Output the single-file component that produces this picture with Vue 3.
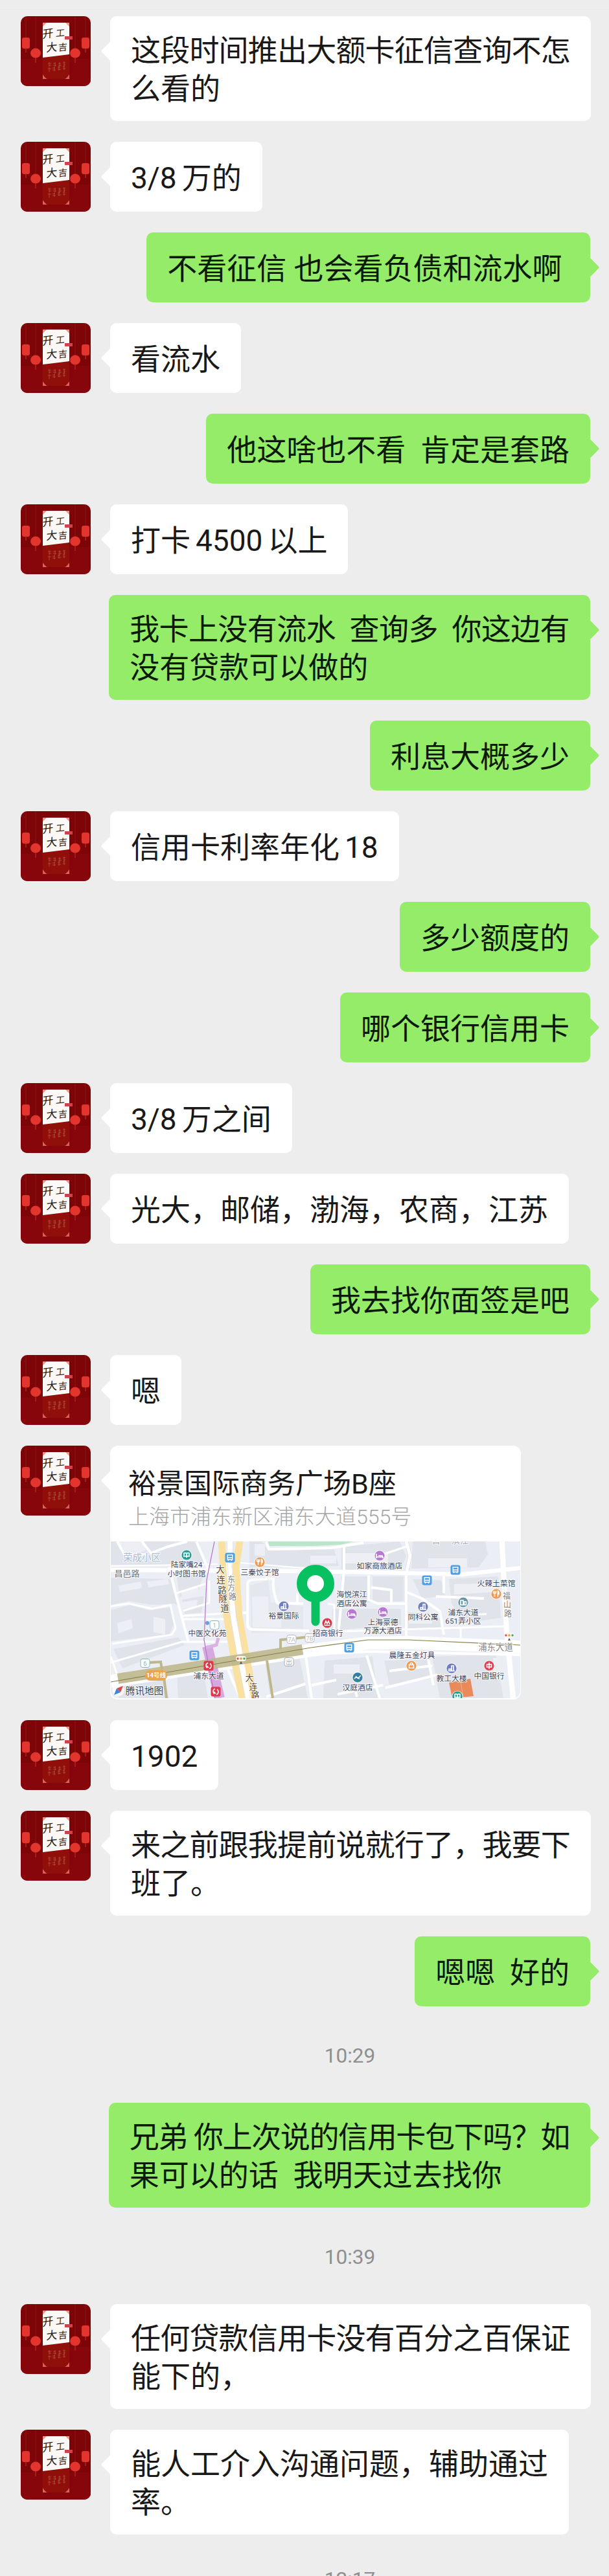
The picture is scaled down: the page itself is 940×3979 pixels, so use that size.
<template>
  <div class="chat">
    <template v-for="(m, i) in messages" :key="i">
      <div v-if="m.type === 'time'" class="time">{{ m.text }}</div>

      <div v-else class="row" :class="m.me ? 'me' : 'peer'">
        <svg v-if="!m.me" class="avatar" viewBox="0 0 108 108">
          <rect width="108" height="108" fill="#7d0508" />
          <path d="M0 66H108V108H0z" fill="#87060b" />
          <path d="M8 0V34M100 0V34M23 0V50M84 0V50" stroke="#94201d" stroke-width=".7" />
          <path d="M34 60h41v37H34z" fill="#900f0a" />
          <path d="M34 10h41v49L34 64z" fill="#fbf8f6" />
          <path d="M34 10h6l-6 6zM75 10h-6l6 6z" fill="#e9958b" />
          <path d="M34 97v-7q4 6 7 7zM75 97v-7q-4 6-7 7z" fill="#d9645c" />
          <g fill="#e2352e">
            <rect x="2" y="33" width="12" height="17" rx="3" />
            <rect x="94" y="33" width="12" height="17" rx="3" />
            <ellipse cx="23" cy="57" rx="8" ry="7.5" />
            <ellipse cx="84" cy="57" rx="8" ry="7.5" />
            <rect x="68" y="31" width="12" height="5" fill="#c9464a" />
          </g>
          <path d="M8 50v6M100 50v6M23 64v8M84 64v8" stroke="#c22a25" stroke-width="1.2" />
          <g class="brush">
            <text transform="translate(42 27) rotate(-8) skewX(-10)">开</text>
            <text transform="translate(61 26) rotate(-6) skewX(-10)" font-size="14">工</text>
            <text transform="translate(48 48) rotate(-6) skewX(-8)">大</text>
            <text transform="translate(65 48) rotate(-6) skewX(-8)" font-size="14">吉</text>
          </g>
          <path d="M42 73h5m-4 3h4m-3-5v7m6-5h4m-4 3h5m-2-5v7m5-5h4m-4 3h5m-3-5v7m5-6h4m-3 3h3m-2-5v7M42 81h5m-3-2v7m5-6h4m-4 3h5m-2-5v7m5-6h4m-4 3h5m-3-5v7m6-6h3m-3 3h4m-2-5v7" stroke="#b55f45" stroke-width=".7" fill="none" />
        </svg>

        <div v-if="m.type === 'place'" class="card">
          <div class="place-name">裕景国际商务广场B座</div>
          <div class="place-addr">上海市浦东新区浦东大道555号</div>
          <svg class="map" viewBox="0 0 632 242">
            <rect width="632" height="242" fill="#eceef5" />
            <!-- blocks -->
            <g fill="#e0e3ea">
              <path d="M0 0h10l14 24 30-10L50 0h82l16 36H0z" />
              <path d="M0 56l92 2 14 44-8-6-34 2-36-6-28 6zM0 106l30-8 28 8 34-4 6 24-8 18-90 10zM4 166l100-18 10 12-96 36z" />
              <path d="M102 54l42-6-8 26-30 12zM110 90l34-6-4 26-26 2z" />
              <path d="M215 68l28-8 4 34 50 6v38l-80 4z" fill="#e4e7ee" />
              <path d="M214 0h20l8 12 42 2 60-4 8 28-138 2z" />
              <path d="M356 8l90-8 10 22-6 18-94 4zM466 0h112l4 20-14 20-104 2zM356 54h40l6 40-42 4zM404 54h48v38l-48 2zM466 58l44 2 6 24-36 4zM522 58l76-4 4 64-58 8-18-30zM342 104l106 0v24l-108 10zM456 108l54 10 4 16-60 2z" />
              <path d="M330 184l74-6 8 64h-84zM422 184l66-2 6 30-64 10zM496 178l98-4 12 68h-98zM238 182l52-8 14 68h-58zM12 214l70-10 8 38H12zM102 202l40-6 8 46h-46z" />
            </g>
            <g fill="#edeff5">
              <path d="M20 6l20-6 10 8-22 8zM12 68l34-6 2 10-34 6zM56 62l32-4 2 8-32 5zM66 116l18 4 0 24-18-4zM10 126l22-6 2 14-22 8zM108 76l26-8 2 10-26 8zM110 94l24-4-2 12-20 2zM218 85h25v28h20v20h-44zM222 4h16v18h-16zM360 18h68v16h-68zM490 26h60v14h-60zM308 22h40v12h-40zM530 66l64-2v14l-64 4zM590 180h10v30h-10zM460 115h36v12h-36zM344 190h40v14h-40z" />
            </g>
            <path d="M237 0h138l-20 5-42 2h-68z" fill="#b9e5c9" />
            <!-- side streets -->
            <g fill="none" stroke="#d5d8e0" stroke-width="6">
              <path d="M0 44L309 46 459 49 542 51 632 41M604 0L606 46 611 139 621 242M456 0L462 22 456 50V150" />
            </g>
            <g fill="none" stroke="#fff" stroke-linejoin="round">
              <path d="M0 44L309 46 459 49 542 51 632 41" stroke-width="6.5" />
              <path d="M0 38L165 35M200 33L309 42" stroke-width="2" />
              <path d="M604 0L606 46 611 139 621 242" stroke-width="8" />
              <path d="M456 0L462 22 456 50V150" stroke-width="5" />
              <path d="M90 40l12 48 18 68M132 0l18 42M10 0l12 22 32-2M48 0l14 18 26-10 30-8" stroke-width="4" />
              <path d="M0 100l28-4 36 8 28-6 8 36-6 10-92 14M0 187l110-32h72M10 206L0 178M98 81l50-16M110 115l70-4M112 120h72M112 107l40-12V60" stroke-width="3" />
              <path d="M297 96l-40-1q-8-20-6-38l-32 2q-8 1-8 8v60q0 9 9 9l86 2M197 110h14M288 80v16" stroke-width="4" />
              <path d="M240 0l4 12 96-2 50-8M360 8v38l-9 100M398 52v38l14 6h44M402 71l31 4v20M456 56v22l24 10 28 20 6 36M514 52v28M502 85l74 3" stroke-width="4" />
              <path d="M350 139l260-8M540 132v20M420 20l36-12M552 114l28-2M335 96l10 2v46" stroke-width="3" />
              <path d="M309 174L402 170l230 5M395 176l20 66M490 182l8 40M430 200l66-8M350 236l70-14M240 240l60-20M616 170l16-8M348 214l-38 8M380 240l-4-16M424 226l80-20M180 196l20 46M300 170l10 72" stroke-width="4" />
              <path d="M0 216L309 168 397 157 459 156 632 163" stroke-width="20" />
            </g>
            <!-- tunnel and its side lanes -->
            <g fill="none">
              <path d="M171 0L179 116 192 189 203 242" stroke="#fbe1a0" stroke-width="11" />
              <path d="M199 0L193 39 198 116 207 166 221 242" stroke="#fbe1a0" stroke-width="11" />
              <path d="M184 0L182 40 189 116 202 189 212 242" stroke="#fff" stroke-width="8" />
              <path d="M179 0L184 116 197 189 207 242M190 0L188 45 194 116 209 189" stroke="#dfe0e4" stroke-width=".8" />
              <path d="M149 162L168 242" stroke="#d5a8e0" stroke-width="16" />
              <path d="M146 164l17-4 3-11" stroke="#d9b4e3" stroke-width="5" />
            </g>
            <g fill="none" stroke="#bdb78c">
              <path d="M11 212L296 167" stroke-width="16" opacity=".9" />
              <path d="M60 187l17-1 2 12M262 166v-14l38-4M82 210l4 32M241 184l9 58" stroke-width="4" />
            </g>
            <path d="M0 217L309 164 397 152H459L632 160" fill="none" stroke="#857d45" stroke-width="1.2" />
            <path d="M160 0L148 59 144 152 151 192 161 242" fill="none" stroke="#b878ca" stroke-width="1.3" />
            <path d="M522 218l33-6 5 27-33 3z" fill="#e98a5a" />
            <path d="M540 215l4 26" stroke="#f3b08b" />

            <!-- points of interest -->
            <g v-for="(p, k) in pois" :key="'p' + k" :transform="`translate(${p.x} ${p.y})`">
              <circle r="8.6" fill="#fff" opacity=".7" />
              <circle r="7.6" :fill="p.c" />
              <path :d="glyphs[p.g]" fill="none" stroke="#fff" stroke-width="1.6" />
            </g>
            <g v-for="(b, k) in buses" :key="'b' + k" :transform="`translate(${b[0]} ${b[1]})`">
              <rect x="-7.5" y="-7.5" width="15" height="15" rx="3" fill="#4b9fe6" />
              <path d="M-3.8-4.2h7.6v7.2h-7.6zM-3.8 0h7.6M-2.5 3v2M2.5 3v2" fill="none" stroke="#fff" stroke-width="1.4" />
            </g>
            <g v-for="(s, k) in metros" :key="'m' + k" :transform="`translate(${s[0]} ${s[1]})`">
              <rect x="-7.5" y="-7.5" width="15" height="15" rx="3" fill="#e0394b" />
              <path d="M-1-4.5a4.5 4.5 0 0 0-1 8M1 4.5a4.5 4.5 0 0 0 1-8M-3 0l3 3" fill="none" stroke="#fff" stroke-width="1.5" />
            </g>
            <g v-for="(t, k) in lights" :key="'l' + k" :transform="`translate(${t[0]} ${t[1]})`">
              <rect x="-8" y="-4" width="16" height="8" rx="4" fill="#f7f5ee" />
              <circle cx="-5" r="1.7" fill="#d9534a" /><circle r="1.7" fill="#dfa03a" /><circle cx="5" r="1.7" fill="#4aa564" />
              <path d="M-2 8L0 4l2 4z" fill="#555" />
            </g>
            <g v-for="(e, k) in exits" :key="'e' + k">
              <rect :x="e.x - 7" :y="e.y - 6.5" width="14" height="13" rx="3" fill="#fff" :stroke="e.c" />
              <text :x="e.x" :y="e.y" class="lbl bare" font-size="9.5" :fill="e.c">{{ e.t }}</text>
            </g>
            <circle cx="149" cy="126" r="3" fill="#6d9fd0" />
            <rect x="53" y="199" width="34" height="16" rx="8" fill="#e9a44c" />
            <text x="70" y="206" class="lbl bare" font-size="9.5" font-weight="700" fill="#fff">14号线</text>

            <text
              v-for="(l, k) in labels"
              :key="k"
              class="lbl"
              :x="l[1]"
              :y="l[2]"
              :font-size="l[3] || 11.8"
              :fill="l[4] || '#3f475c'"
            >{{ l[0] }}</text>

            <!-- provider mark -->
            <circle cx="12" cy="230" r="9" fill="#fff" opacity=".75" />
            <path d="M19 223l-4 10-6-6z" fill="#e2473d" />
            <path d="M5 237l4-10 6 6z" fill="#3a87dc" />
            <text x="52" y="231" class="lbl" font-size="14.6" fill="#3d3f45">腾讯地图</text>

            <!-- marker -->
            <path d="M316 92V124" stroke="#07c160" stroke-width="13" stroke-linecap="round" />
            <circle cx="316" cy="65" r="21" fill="#fff" stroke="#07c160" stroke-width="16" />
          </svg>
        </div>

        <div v-else class="bubble">
          <div v-for="(l, n) in m.lines" :key="n" class="line" :style="lineStyle(l)">{{ l.t || l }}</div>
        </div>
      </div>
    </template>
  </div>
</template>

<script setup>
const peer = (...lines) => ({ type: 'text', lines })
const me = (...lines) => ({ type: 'text', me: true, lines })
const time = (text) => ({ type: 'time', text })

const messages = [
  peer({ t: '这段时间推出大额卡征信查询不怎', ls: -0.8 }, '么看的'),
  peer({ t: '3/8 万的', ws: -3.4 }),
  me('不看征信 也会看负债和流水啊 '),
  peer('看流水'),
  me('他这啥也不看  肯定是套路'),
  peer({ t: '打卡 4500 以上', ws: -3.4 }),
  me({ t: '我卡上没有流水  查询多  你这边有', ls: -0.6 }, '没有贷款可以做的'),
  me('利息大概多少'),
  peer({ t: '信用卡利率年化 18', ws: -3.4 }),
  me('多少额度的'),
  me('哪个银行信用卡'),
  peer({ t: '3/8 万之间', ws: -3.4 }),
  peer('光大，邮储，渤海，农商，江苏'),
  me('我去找你面签是吧'),
  peer('嗯'),
  { type: 'place' },
  peer('1902'),
  peer({ t: '来之前跟我提前说就行了，我要下', ls: -0.8 }, '班了。'),
  me('嗯嗯  好的'),
  time('10:29'),
  me({ t: '兄弟 你上次说的信用卡包下吗？如', ls: -1.38 }, '果可以的话  我明天过去找你'),
  time('10:39'),
  peer({ t: '任何贷款信用卡没有百分之百保证', ls: -0.8 }, '能下的，'),
  peer('能人工介入沟通问题，辅助通过', '率。'),
  time('12:17'),
]

const lineStyle = (l) => ({
  letterSpacing: l.ls ? `${l.ls}px` : null,
  wordSpacing: l.ws ? `${l.ws}px` : null,
})

const glyphs = {
  book: 'M0-2v6M-4-3q3-1 4 1q1-2 4-1v5q-3-1-4 1q-1-2-4-1z',
  food: 'M-2.5-4.5v9M-4.5-4.5v3q2 2 4 0v-3M2.5 4.5v-9q2 1 1.5 5h-1.5',
  tower: 'M-4 4v-3h3v3M0 4v-8h3v8M-5 4h10',
  bed: 'M-5-3v7M-5 2h10v2M-2 0h6v2',
  bank: 'M-4.5 3.5h9M-4 2l2-5 2 4 2-4 2 5',
  coin: 'M-3.5-2h7v4h-7zM0-5v10',
  home: 'M-4 4v-7h4v7M1.5 4v-5h3v5M-5 4h10',
  shop: 'M-3.5-1.5h7v5h-7zM-2-2q0-2.5 2-2.5t2 2.5',
  horse: 'M-5 2q3-4 6-1l4-4M-3-2q3 4 6 4',
}

const pois = [
  { x: 117, y: 21, c: '#22a096', g: 'book' },
  { x: 230, y: 32, c: '#f0984c', g: 'food' },
  { x: 267, y: 100, c: '#6f7ec2', g: 'tower' },
  { x: 334, y: 126, c: '#d9374a', g: 'bank' },
  { x: 372, y: 112, c: '#b57ad0', g: 'bed' },
  { x: 420, y: 109, c: '#b57ad0', g: 'bed' },
  { x: 415, y: 22, c: '#b57ad0', g: 'bed' },
  { x: 482, y: 101, c: '#6f7ec2', g: 'tower' },
  { x: 544, y: 94, c: '#6498a5', g: 'home' },
  { x: 595, y: 81, c: '#f0984c', g: 'food' },
  { x: 464, y: 192, c: '#f0984c', g: 'shop' },
  { x: 381, y: 210, c: '#34809f', g: 'horse' },
  { x: 526, y: 196, c: '#6f7ec2', g: 'tower' },
  { x: 535, y: 239, c: '#22a096', g: 'book' },
  { x: 584, y: 192, c: '#df4152', g: 'coin' },
]
const buses = [[184, 25], [129, 176], [488, 60], [532, 44], [368, 164]]
const metros = [[151, 192], [162, 232]]
const lights = [[201, 181], [615, 145]]
const exits = [
  { t: '1', x: 160, y: 129, c: '#7db9cc' },
  { t: '6', x: 53, y: 188, c: '#7cbcc0' },
  { t: '7A', x: 279, y: 151, c: '#b9bbc2' },
  { t: '7B', x: 307, y: 149, c: '#b9bbc2' },
  { t: '出', x: 275, y: 186, c: '#a9acb4' },
]

const dark = '#5b4a41', gray = '#85848a'
// text, centre x, centre y, size, colour
const labels = [
  ['荣成小区', 48, 25, 14.4, '#a5bbd3'],
  ['昌邑路', 25, 49, 13, '#77757a'],
  ['陆家嘴24', 117, 36], ['小时图书馆', 117, 50],
  ['大', 169, 43, 13.5, dark], ['连', 170, 59, 13.5, dark], ['路', 172, 75, 13.5, dark], ['隧', 173, 88, 13.5, dark], ['道', 176, 103, 13.5, dark],
  ['东', 186, 59, 12, gray], ['方', 186, 72, 12, gray], ['路', 188, 86, 12, gray],
  ['三秦饺子馆', 230, 48],
  ['裕景国际', 267, 115],
  ['中医文化苑', 149, 142],
  ['浦东大道', 151, 208],
  ['大', 214, 210, 13, dark], ['连', 220, 224, 13, dark], ['路', 223, 237, 13, dark],
  ['招商银行', 335, 142],
  ['海悦滨江', 372, 82], ['酒店公寓', 372, 96],
  ['上海豪德', 420, 125], ['万源大酒店', 420, 138],
  ['如家商旅酒店', 415, 38],
  ['同科公寓', 482, 117],
  ['浦东大道', 544, 110], ['651弄小区', 544, 123],
  ['火辣土菜馆', 595, 65],
  ['福', 611, 85, 12, gray], ['山', 612, 98, 12, gray], ['路', 613, 112, 12, gray],
  ['浦东大道', 594, 163, 13.4, gray],
  ['晨隆五金灯具', 465, 176],
  ['汉庭酒店', 381, 226],
  ['教工大楼', 526, 212],
  ['中国银行', 584, 208],
  ['营', 502, -2, 13, '#a9adb8'], ['滨江', 539, -2, 13, '#a9adb8'],
]
</script>

<style>
body { background: #ededed; }
</style>

<style scoped>
.chat {
  box-sizing: border-box;
  height: 3979px;
  padding-top: 25px;
  overflow: hidden;
  display: flex;
  flex-direction: column;
  gap: 32px;
  background: linear-gradient(#e8e8e8, #e8e8e8) 0 14px / 100% 1px no-repeat #ededed;
  font-family: Roboto, "Noto Sans CJK SC", sans-serif;
  color: #191919;
}
.row { display: flex; align-items: flex-start; flex: none; }
.peer { padding-left: 32px; gap: 30px; }
.me { justify-content: flex-end; padding-right: 29px; }
.avatar { width: 108px; height: 108px; border-radius: 10px; flex: none; display: block; }
.brush { font-size: 17px; }
.brush text { fill: #1c1c1c; text-anchor: middle; dominant-baseline: central; }

.bubble {
  position: relative;
  box-sizing: border-box;
  min-height: 108px;
  padding: 24px 32px 20px;
  border-radius: 10px;
  background: #fff;
  display: flex;
  flex-direction: column;
  justify-content: center;
}
.line { font-size: 46px; line-height: 59px; white-space: pre; }
.me .bubble { background: #95ec69; color: #0b1a05; }

/* tail */
.bubble::before,
.card::before {
  content: "";
  position: absolute;
  top: 43px;
  left: -10px;
  width: 22px;
  height: 22px;
  border-radius: 3px;
  background: #fff;
  transform: rotate(45deg);
}
.me .bubble::before { left: auto; right: -10px; background: #95ec69; }

.card {
  position: relative;
  box-sizing: border-box;
  width: 634px;
  height: 392px;
  padding: 34px 1px 0;
  border-radius: 12px;
  background: #fff;
}
.place-name { padding-left: 27px; font-size: 43px; line-height: 50px; white-space: nowrap; }
.place-addr { padding-left: 27px; margin-bottom: 12px; font-size: 32px; line-height: 52px; font-weight: 300; color: #a6a6a6; white-space: nowrap; }
.map { display: block; width: 632px; height: 242px; border-radius: 0 0 10px 10px; }
.lbl { text-anchor: middle; dominant-baseline: central; paint-order: stroke; stroke: rgba(255, 255, 255, .8); stroke-width: 2px; }
.lbl.bare { stroke: none; }

.time { flex: none; height: 85px; line-height: 89px; padding-left: 140px; text-align: center; font-size: 31.5px; color: #8f8f8f; }
.time:last-child { line-height: 76px; }
</style>
